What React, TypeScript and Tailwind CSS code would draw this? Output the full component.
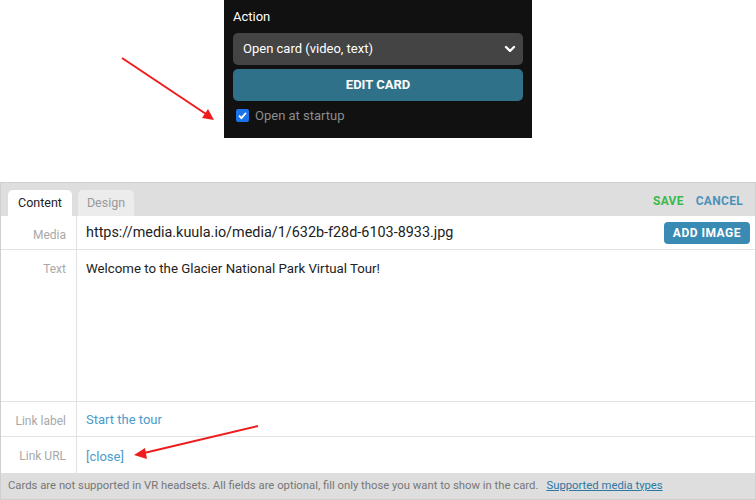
import { ChevronDown } from "lucide-react";

function Row({ label, children, className = "" }: { label: string; children: React.ReactNode; className?: string }) {
  return (
    <div className={`flex border-b border-[#e2e2e2] ${className}`}>
      <div className="w-[76px] shrink-0 border-r border-[#e2e2e2] pr-[10px] pt-[10px] text-right text-[12px] text-[#a8a8a8]">{label}</div>
      <div className="flex-1 min-w-0">{children}</div>
    </div>
  );
}

export default function App() {
  return (
    <div className="relative h-[500px] w-[756px] overflow-hidden bg-white" style={{ fontFamily: "Roboto, 'Liberation Sans', sans-serif" }}>
      {/* dark action panel */}
      <div className="flex h-[138px] flex-col">
        <div className="ml-[224px] w-[308px] flex-1 bg-[#111111] px-[9px] pt-[8px]">
          <div className="text-[13px] leading-[18px] text-white">Action</div>
          <div className="mt-[7px] flex h-[32px] items-center justify-between rounded-[5px] bg-[#444444] pl-[10px] pr-[5px] text-[13px] text-white">
            <span>Open card (video, text)</span>
            <ChevronDown className="h-4 w-4" strokeWidth={3.5} />
          </div>
          <div className="mt-[4px] flex h-[32px] items-center justify-center rounded-[5px] bg-[#2f7189] text-[13px] font-bold text-white">EDIT CARD</div>
          <div className="mt-[5px] flex items-center gap-[6px] pl-[3px]">
            <span className="flex h-[13px] w-[13px] items-center justify-center rounded-[2px] bg-[#1a73e8]">
              <svg viewBox="0 0 12 12" className="h-[11px] w-[11px]"><path d="M2.2 6.2 L4.8 8.8 L9.8 3.2" fill="none" stroke="white" strokeWidth="2" /></svg>
            </span>
            <span className="text-[13px] text-[#8c8c8c]">Open at startup</span>
          </div>
        </div>
      </div>

      {/* card editor */}
      <div className="mt-[44px] flex h-[318px] flex-col border border-[#cfcfcf] bg-white">
        <div className="flex h-[33px] items-end justify-between bg-[#dedede] pl-[7px] pr-[12px]">
          <div className="flex gap-[6px]">
            <div className="flex h-[26px] items-center rounded-t-[5px] bg-white px-[10px] text-[12.5px] text-[#222]">Content</div>
            <div className="flex h-[26px] items-center rounded-t-[5px] bg-[#ececec] px-[9px] text-[12.5px] text-[#999]">Design</div>
          </div>
          <div className="mb-[6px] flex gap-[12px] text-[12px] font-bold tracking-[0.3px]">
            <span className="text-[#3cb94a]">SAVE</span>
            <span className="text-[#4d93b9]">CANCEL</span>
          </div>
        </div>
        <Row label="Media" className="h-[34px]">
          <div className="flex h-full items-center justify-between pl-[9px] pr-[5px]">
            <span className="text-[14.4px] text-[#222]">https://media.kuula.io/media/1/632b-f28d-6103-8933.jpg</span>
            <span className="flex h-[22px] items-center rounded-[4px] bg-[#3a8bb3] px-[9px] text-[12px] font-bold tracking-[0.5px] text-white">ADD IMAGE</span>
          </div>
        </Row>
        <Row label="Text" className="h-[152px]">
          <div className="pl-[9px] pt-[9px] text-[13.25px] text-[#222]">Welcome to the Glacier National Park Virtual Tour!</div>
        </Row>
        <Row label="Link label" className="h-[35px]">
          <div className="pl-[9px] pt-[8px] text-[13px] text-[#4a9ccc]">Start the tour</div>
        </Row>
        <Row label="Link URL" className="h-[36px] border-b-0">
          <div className="pl-[9px] pt-[10px] text-[13px] text-[#4a9ccc]">[close]</div>
        </Row>
        <div className="flex flex-1 items-center bg-[#dedede] pl-[7px] text-[11.3px] text-[#777]">
          <span>Cards are not supported in VR headsets. All fields are optional, fill only those you want to show in the card.</span>
          <span className="ml-[8px] text-[#2d77a3] underline">Supported media types</span>
        </div>
      </div>

      {/* annotation arrows */}
      <svg className="pointer-events-none absolute left-0 top-0" width="756" height="500">
        <line x1="122" y1="58" x2="206" y2="114" stroke="#ee1c1c" strokeWidth="2" />
        <polygon points="214,120 202,118 208,109" fill="#ee1c1c" />
        <line x1="258" y1="426" x2="144" y2="453" stroke="#ee1c1c" strokeWidth="2" />
        <polygon points="134,455 145,448 147,459" fill="#ee1c1c" />
      </svg>
    </div>
  );
}
